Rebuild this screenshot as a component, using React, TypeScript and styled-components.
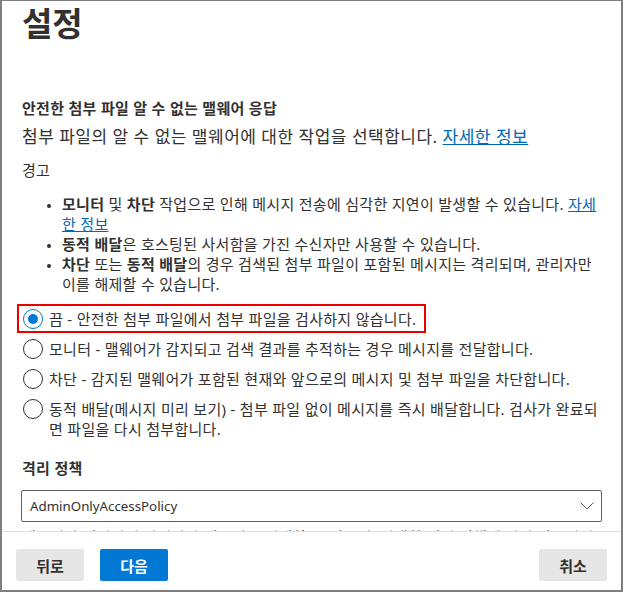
import React from "react";
import styled, { createGlobalStyle } from "styled-components";

const Global = createGlobalStyle`
  html, body { margin: 0; padding: 0; background: #ffffff; }
  body {
    font-family: "Segoe UI", "Noto Sans", "Noto Sans CJK KR", sans-serif;
    color: #323130;
  }
  * { box-sizing: border-box; }
`;

const Frame = styled.div`
  width: 623px;
  height: 592px;
  border: 2px solid #7f7f7f;
  border-top-width: 1px;
  display: flex;
  flex-direction: column;
  background: #ffffff;
  overflow: hidden;
`;

const Content = styled.div`
  flex: 1;
  overflow: hidden;
  padding: 3px 19px 0 20px;
  display: flex;
  flex-direction: column;
`;

const Title = styled.h1`
  margin: 0;
  font-size: 33px;
  line-height: 40px;
  font-weight: 700;
  color: #323130;
`;

const SectionTitle = styled.h2`
  margin: 54px 0 0;
  font-size: 15px;
  line-height: 20px;
  font-weight: 700;
  letter-spacing: 0.3px;
`;

const Description = styled.p`
  margin: 8px 0 0;
  font-size: 17px;
  line-height: 22px;
  letter-spacing: 0.5px;
`;

const Link = styled.a`
  color: #0067b8;
  text-decoration: underline;
  cursor: pointer;
`;

const Label = styled.div<{ $strong?: boolean; $top: number }>`
  margin-top: ${(p) => p.$top}px;
  font-size: 15px;
  line-height: 20px;
  font-weight: ${(p) => (p.$strong ? 600 : 400)};
  letter-spacing: 0.3px;
`;

const Bullets = styled.ul`
  margin: 14px 0 0;
  padding: 0 0 0 40px;
  font-size: 15px;
  line-height: 20px;
  letter-spacing: 0.3px;
  li::marker { font-size: 12px; }
  b { font-weight: 700; }
`;

const Options = styled.div`
  margin: 10px -6px 0 -5px;
  display: flex;
  flex-direction: column;
  gap: 1px;
`;

const Option = styled.label<{ $highlight?: boolean }>`
  display: flex;
  align-items: flex-start;
  gap: 6px;
  width: ${(p) => (p.$highlight ? "fit-content" : "auto")};
  padding: 3px ${(p) => (p.$highlight ? 8 : 4)}px 2px 4px;
  border: 2px solid ${(p) => (p.$highlight ? "#ee0000" : "transparent")};
  font-size: 15px;
  line-height: 20px;
  letter-spacing: 0.3px;
  cursor: pointer;
`;

const Radio = styled.span<{ $checked?: boolean }>`
  flex: none;
  width: 20px;
  height: 20px;
  border-radius: 50%;
  border: 1px solid ${(p) => (p.$checked ? "#0078d4" : "#323130")};
  display: flex;
  align-items: center;
  justify-content: center;
  &::after {
    content: "";
    width: 10px;
    height: 10px;
    border-radius: 50%;
    background: ${(p) => (p.$checked ? "#0078d4" : "transparent")};
  }
`;

const Dropdown = styled.div`
  margin-top: 12px;
  margin-left: -1px;
  height: 32px;
  border: 1px solid #605e5c;
  border-radius: 2px;
  display: flex;
  align-items: center;
  justify-content: space-between;
  padding: 0 7px 0 8px;
  font-size: 13.3px;
  color: #323130;
  flex: none;
`;

const HelpText = styled.p`
  margin: 5px 0 0;
  font-size: 15px;
  line-height: 20px;
  letter-spacing: 0.3px;
`;

const Footer = styled.div`
  flex: none;
  border-top: 1px solid #e1dfdd;
  padding: 17px 14px 9px;
  display: flex;
  gap: 16px;
`;

const Button = styled.button<{ $primary?: boolean }>`
  width: 68px;
  height: 32px;
  border: none;
  border-radius: 2px;
  font-family: inherit;
  font-size: 15px;
  font-weight: 600;
  background: ${(p) => (p.$primary ? "#0078d4" : "#e6e6e6")};
  color: ${(p) => (p.$primary ? "#ffffff" : "#323130")};
  cursor: pointer;
  &:last-child { margin-left: auto; }
`;

const options = [
  "끔 - 안전한 첨부 파일에서 첨부 파일을 검사하지 않습니다.",
  "모니터 - 맬웨어가 감지되고 검색 결과를 추적하는 경우 메시지를 전달합니다.",
  "차단 - 감지된 맬웨어가 포함된 현재와 앞으로의 메시지 및 첨부 파일을 차단합니다.",
  "동적 배달(메시지 미리 보기) - 첨부 파일 없이 메시지를 즉시 배달합니다. 검사가 완료되면 파일을 다시 첨부합니다.",
];

export default function App() {
  return (
    <>
      <Global />
      <Frame>
        <Content>
          <Title>설정</Title>
          <SectionTitle>안전한 첨부 파일 알 수 없는 맬웨어 응답</SectionTitle>
          <Description>
            첨부 파일의 알 수 없는 맬웨어에 대한 작업을 선택합니다. <Link>자세한 정보</Link>
          </Description>
          <Label $top={12}>경고</Label>
          <Bullets>
            <li>
              <b>모니터</b> 및 <b>차단</b> 작업으로 인해 메시지 전송에 심각한 지연이 발생할 수 있습니다.{" "}
              <Link>자세한 정보</Link>
            </li>
            <li>
              <b>동적 배달</b>은 호스팅된 사서함을 가진 수신자만 사용할 수 있습니다.
            </li>
            <li>
              <b>차단</b> 또는 <b>동적 배달</b>의 경우 검색된 첨부 파일이 포함된 메시지는 격리되며, 관리자만 이를 해제할 수 있습니다.
            </li>
          </Bullets>
          <Options>
            {options.map((text, i) => (
              <Option key={i} $highlight={i === 0}>
                <Radio $checked={i === 0} />
                <span>{text}</span>
              </Option>
            ))}
          </Options>
          <Label $top={15} $strong>
            격리 정책
          </Label>
          <Dropdown>
            <span>AdminOnlyAccessPolicy</span>
            <svg width="14" height="8" viewBox="0 0 14 8" fill="none">
              <polyline points="0.5,0.5 7,7 13.5,0.5" stroke="#605e5c" strokeWidth="1" />
            </svg>
          </Dropdown>
          <HelpText>
            메시지가 격리되면 관리자만 메시지를 해제할 수 있으며, 선택한 격리 정책에 따라 사용자가 수행할 수 있는 작업이 결정됩니다.
          </HelpText>
        </Content>
        <Footer>
          <Button>뒤로</Button>
          <Button $primary>다음</Button>
          <Button>취소</Button>
        </Footer>
      </Frame>
    </>
  );
}
